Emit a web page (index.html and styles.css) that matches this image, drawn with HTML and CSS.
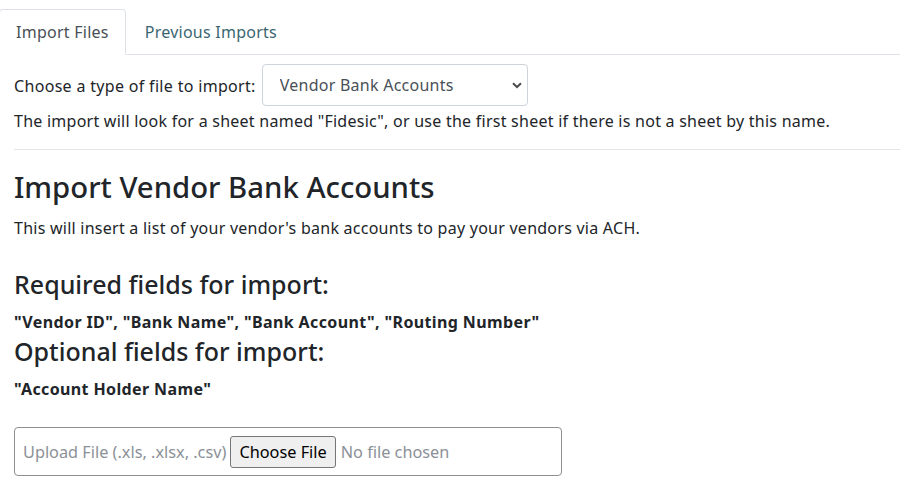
FILE: index.html
```html
<!DOCTYPE html>
<html lang="en">
<head>
<meta charset="utf-8">
<title>Import Files</title>
<link rel="stylesheet" href="styles.css">
</head>
<body>
<ul class="tabs">
  <li class="tab tab-active">Import Files</li>
  <li class="tab tab-link">Previous Imports</li>
</ul>
<main class="content">
  <div class="type-row">
    <label class="type-label" for="fileType">Choose a type of file to import:</label>
    <div class="select-wrap">
      <select id="fileType" class="type-select">
        <option>Vendor Bank Accounts</option>
      </select>
      <svg class="select-arrow" width="10" height="7" viewBox="0 0 10 7"><path d="M1 1.2 L5 5 L9 1.2" fill="none" stroke="#4d4d4d" stroke-width="2"/></svg>
    </div>
  </div>
  <p class="note">The import will look for a sheet named "Fidesic", or use the first sheet if there is not a sheet by this name.</p>
  <hr class="divider">
  <h2 class="title">Import Vendor Bank Accounts</h2>
  <p class="desc">This will insert a list of your vendor's bank accounts to pay your vendors via ACH.</p>
  <h4 class="fields-head fields-required">Required fields for import:</h4>
  <p class="fields-list fields-list-req">"Vendor ID", "Bank Name", "Bank Account", "Routing Number"</p>
  <h4 class="fields-head fields-optional">Optional fields for import:</h4>
  <p class="fields-list fields-list-opt">"Account Holder Name"</p>
  <label class="upload">
    <span class="upload-hint">Upload File (.xls, .xlsx, .csv)</span>
    <input type="file" class="upload-input" accept=".xls,.xlsx,.csv">
  </label>
</main>
</body>
</html>
```
FILE: styles.css
```css
* { box-sizing: border-box; }
html, body { margin: 0; padding: 0; background: #fff; }
body {
  font-family: "Noto Sans", "Open Sans", sans-serif;
  font-size: 16px;
  line-height: 24px;
  letter-spacing: 0.25px;
  color: #212529;
  overflow: hidden;
}
.tabs {
  list-style: none;
  margin: 9px 0 0 -1px;
  padding: 0;
  display: flex;
  border-bottom: 1px solid #dee2e6;
}
.tab {
  padding: 10px 16px;
  border: 1px solid transparent;
  border-top-left-radius: 4px;
  border-top-right-radius: 4px;
  margin-bottom: -1px;
  line-height: 24px;
}
.tab-active {
  color: #495057;
  background: #fff;
  border-color: #dee2e6 #dee2e6 #fff;
}
.tab-link { color: #3a6672; padding-left: 18px; }
.content { padding: 0 0 0 14px; }
.type-row {
  display: flex;
  align-items: center;
  gap: 6px;
  margin-top: 9px;
}
.type-label { padding-top: 1px; letter-spacing: 0.32px; }
.select-wrap { position: relative; }
.type-select {
  appearance: none;
  -webkit-appearance: none;
  width: 266px;
  height: 42px;
  padding: 0 12px 0 17px;
  font: inherit;
  letter-spacing: 0.25px;
  color: #495057;
  background: #fff;
  border: 1px solid #ced4da;
  border-radius: 4px;
}
.select-arrow {
  position: absolute;
  right: 6px;
  top: 18px;
  pointer-events: none;
}
.note { margin: 3px 0 0; }
.divider {
  margin: 16px 0 0;
  border: 0;
  border-top: 1px solid #e5e5e5;
  height: 0;
}
.title {
  margin: 18px 0 0;
  font-size: 29.3px;
  line-height: 38px;
  font-weight: 500;
  letter-spacing: 0;
}
.desc { margin: 10px 0 0; }
.fields-head {
  font-size: 25px;
  line-height: 29px;
  font-weight: 500;
  letter-spacing: 0;
  margin: 0;
}
.fields-required { margin-top: 30px; }
.fields-optional { margin-top: 3px; }
.fields-list { margin: 0; font-weight: 700; letter-spacing: 0.38px; }
.fields-list-req { margin-top: 11px; }
.fields-list-opt { margin-top: 11px; }
.upload {
  display: flex;
  align-items: center;
  width: 548px;
  height: 49px;
  margin-top: 26px;
  padding: 0 8px;
  border: 1px solid #8f8f8f;
  border-radius: 4px;
  font-size: 16.3px;
  letter-spacing: 0;
  color: #8b9197;
}
.upload-hint { margin-right: 4px; white-space: nowrap; }
.upload-input {
  font: inherit;
  color: #8b9197;
  width: 320px;
}
.upload-input::file-selector-button {
  font: inherit;
  color: #000;
  height: 32px;
  padding: 0 8px;
  margin-right: 5px;
  background: #efefef;
  border: 1px solid #767676;
  border-radius: 3px;
}
```
